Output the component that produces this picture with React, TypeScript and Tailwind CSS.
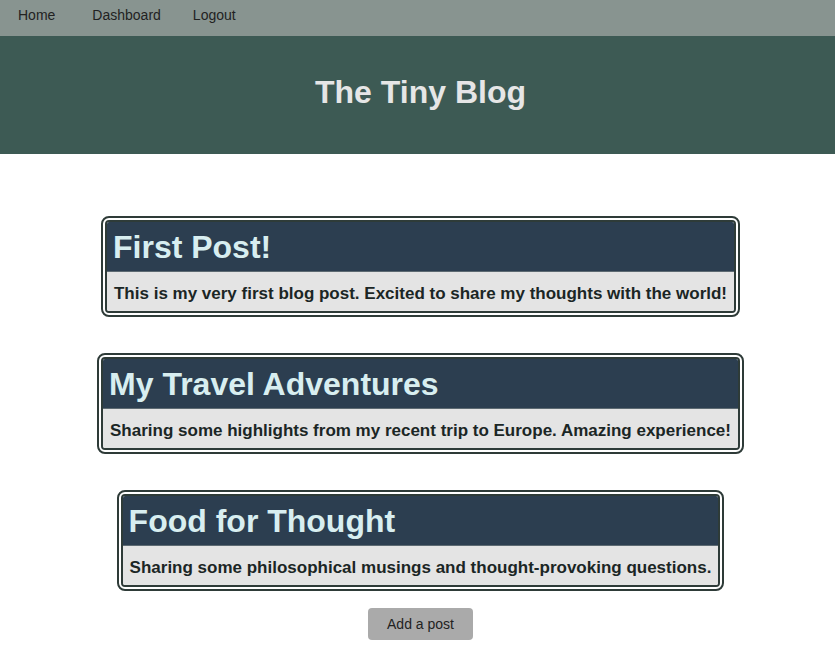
import React from 'react';

const posts = [
  { title: 'First Post!', body: 'This is my very first blog post. Excited to share my thoughts with the world!' },
  { title: 'My Travel Adventures', body: 'Sharing some highlights from my recent trip to Europe. Amazing experience!' },
  { title: 'Food for Thought', body: 'Sharing some philosophical musings and thought-provoking questions.' },
];

function PostCard({ title, body }: { title: string; body: string }) {
  return (
    <div className="border-[6px] border-double border-[#2e3b38] rounded-[8px] overflow-hidden">
      <div className="bg-[#2c3e50] px-[6px] pt-[7px] pb-[5px] border-b border-[#5d6a72]">
        <h2 className="text-[32px] leading-[37px] font-bold text-[#d8eef0]">{title}</h2>
      </div>
      <div className="bg-[#e4e4e4] px-[7px] pt-[12px] pb-[7px]">
        <p className="text-[17px] leading-[20px] font-bold text-[#1b2625]">{body}</p>
      </div>
    </div>
  );
}

export default function App() {
  return (
    <div className="min-h-screen bg-white font-['Liberation_Sans',Arial,sans-serif]">
      {/* Nav */}
      <nav className="h-[36px] bg-[#889490] flex items-start pt-[7px] text-[14px] leading-[16px] text-[#222]">
        <a className="ml-[18px]">Home</a>
        <a className="ml-[37px]">Dashboard</a>
        <a className="ml-[32px]">Logout</a>
      </nav>

      {/* Header */}
      <header className="h-[118px] bg-[#3d5a54] flex items-center justify-center pl-[6px] pb-[6px]">
        <h1 className="text-[32px] font-bold text-[#e6e6e6]">The Tiny Blog</h1>
      </header>

      {/* Posts */}
      <main className="flex flex-col items-center pt-[62px] pl-[6px] gap-[36px]">
        {posts.map((p) => (
          <PostCard key={p.title} title={p.title} body={p.body} />
        ))}
      </main>
      <div className="flex justify-center pl-[6px] mt-[17px]">
        <button className="h-[32px] w-[105px] bg-[#aaaaaa] rounded-[4px] text-[14px] text-[#222]">
          Add a post
        </button>
      </div>
    </div>
  );
}
